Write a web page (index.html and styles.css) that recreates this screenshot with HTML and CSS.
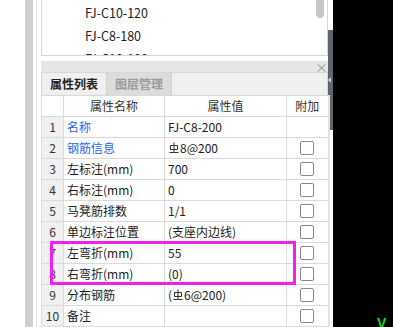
FILE: index.html
```html
<!DOCTYPE html>
<html lang="zh-CN">
<head>
    <meta charset="UTF-8">
    <title>属性列表</title>
    <link rel="stylesheet" href="styles.css">
</head>
<body>
<div class="screen">

    <!-- left gutter: white strip with the splitter bar -->
    <div class="gutter">
        <div class="gutter-bar"></div>
        <div class="gutter-line"></div>
    </div>

    <!-- main column: list on top, property panel below -->
    <div class="main">
        <div class="list">
            <div class="list-items">
                <div class="list-item">FJ-C10-120</div>
                <div class="list-item">FJ-C8-180</div>
                <div class="list-item">FJ-C10-100</div>
            </div>
            <div class="list-scroll"><div class="list-thumb"></div></div>
        </div>

        <div class="panel-head"><span class="panel-close">×</span></div>

        <div class="tabs">
            <div class="tab tab-active">属性列表</div>
            <div class="tab">图层管理</div>
        </div>

        <table class="props">
            <colgroup>
                <col class="col-num">
                <col class="col-name">
                <col class="col-value">
                <col class="col-extra">
            </colgroup>
            <tr class="head">
                <td></td>
                <td>属性名称</td>
                <td>属性值</td>
                <td>附加</td>
            </tr>
            <tr><td class="num">1</td><td class="name link">名称</td><td>FJ-C8-200</td><td></td></tr>
            <tr><td class="num">2</td><td class="name link">钢筋信息</td><td><svg class="rebar" viewBox="0 0 10 12"><path d="M5 0.5V10M1.5 3.5H8.5V7.5H1.5ZM0.5 10.5H9.5"/></svg>8@200</td><td><span class="check"></span></td></tr>
            <tr><td class="num">3</td><td class="name">左标注(mm)</td><td>700</td><td><span class="check"></span></td></tr>
            <tr><td class="num">4</td><td class="name">右标注(mm)</td><td>0</td><td><span class="check"></span></td></tr>
            <tr><td class="num">5</td><td class="name">马凳筋排数</td><td>1/1</td><td><span class="check"></span></td></tr>
            <tr><td class="num">6</td><td class="name">单边标注位置</td><td>(支座内边线)</td><td><span class="check"></span></td></tr>
            <tr><td class="num">7</td><td class="name">左弯折(mm)</td><td>55</td><td><span class="check"></span></td></tr>
            <tr><td class="num">8</td><td class="name">右弯折(mm)</td><td>(0)</td><td><span class="check"></span></td></tr>
            <tr><td class="num">9</td><td class="name">分布钢筋</td><td>(<svg class="rebar" viewBox="0 0 10 12"><path d="M5 0.5V10M1.5 3.5H8.5V7.5H1.5ZM0.5 10.5H9.5"/></svg>6@200)</td><td><span class="check"></span></td></tr>
            <tr><td class="num">10</td><td class="name">备注</td><td></td><td><span class="check"></span></td></tr>
        </table>

        <!-- magenta annotation box over rows 7 and 8 -->
        <div class="highlight"></div>
    </div>

    <!-- right splitter edge -->
    <div class="edge">
        <div class="edge-handle"><span class="edge-arrow"></span></div>
    </div>

    <!-- black area -->
    <div class="dark">
        <span class="dark-mark">V</span>
    </div>

</div>
</body>
</html>
```

FILE: styles.css
```css
/* page */
html, body {
    margin: 0;
    padding: 0;
}

body {
    font-family: "Noto Sans CJK SC", "Noto Sans", sans-serif;
    font-size: 12px;
    color: #222;
    background: #000;
}

.screen {
    display: flex;
    width: 393px;
    height: 327px;
    overflow: hidden;
    background: #fff;
}

/* left gutter */
.gutter {
    display: flex;
    width: 41px;
    flex-shrink: 0;
}

.gutter-bar {
    width: 8px;
    margin-left: 25px;
    background: #cfcfcf;
}

.gutter-line {
    width: 1px;
    margin-left: 3px;
    background: #e4e4e4;
}

/* main column */
.main {
    position: relative;
    width: 287px;
    flex-shrink: 0;
    display: flex;
    flex-direction: column;
}

.list {
    display: flex;
    height: 56px;
    border-left: 1px solid #d6d6d6;
    border-right: 1px solid #d6d6d6;
    border-bottom: 1px solid #d6d6d6;
    overflow: hidden;
}

.list-items {
    flex: 1;
    padding-left: 43px;
    padding-top: 1px;
}

.list-item {
    height: 23px;
    line-height: 23px;
    font-size: 12.5px;
    color: #222;
}

.list-scroll {
    width: 12px;
}

.list-thumb {
    width: 8px;
    height: 22px;
    margin-left: 1px;
    margin-top: -4px;
    border-radius: 4px;
    background: #c6c6c6;
}

.panel-head {
    display: flex;
    justify-content: flex-end;
    align-items: center;
    height: 11px;
    margin-top: 5px;
    background: #e6e6e6;
    border-bottom: 1px solid #d8d8d8;
    padding-right: 1px;
}

.panel-close {
    width: 12px;
    font-size: 13px;
    line-height: 11px;
    color: #9a9a9a;
    text-align: center;
}

/* tabs */
.tabs {
    display: flex;
    height: 22px;
    background: #f0f0f0;
    border-right: 1px solid #d8d8d8;
}

.tab {
    width: 64px;
    line-height: 22px;
    text-align: center;
    font-weight: bold;
    color: #9a9a9a;
    background: #dcdcdc;
    border-right: 1px solid #cfcfcf;
}

.tab-active {
    color: #222;
    background: #f0f0f0;
    border-left: 1px solid #d6d6d6;
}

/* property table */
.props {
    width: 287px;
    border-collapse: collapse;
    table-layout: fixed;
}

.col-num { width: 22px; }
.col-name { width: 101px; }
.col-value { width: 122px; }
.col-extra { width: 42px; }

.props td {
    height: 20px;
    padding: 0 3px;
    border: 1px solid #dadada;
    line-height: 20px;
    white-space: nowrap;
    overflow: hidden;
    color: #222;
}

.props tr:first-child td {
    border-top-color: #d8d8d8;
}

.props .head td {
    text-align: center;
    color: #333;
}

.props td.num {
    padding: 0;
    text-align: center;
    background: #f0f0f0;
    color: #333;
}

.props td.link {
    color: #2b63e6;
}

.props td:last-child {
    text-align: center;
    border-right: 2px solid #e2e2e2;
}

.check {
    display: inline-block;
    width: 12px;
    height: 12px;
    margin-top: 3px;
    border: 1px solid #888;
    border-radius: 2px;
    vertical-align: top;
    background: #fff;
}

.rebar {
    width: 10px;
    height: 12px;
    margin: 0 1px 0 1px;
    vertical-align: -1px;
    fill: none;
    stroke: #333;
    stroke-width: 1;
}

.highlight {
    position: absolute;
    left: 9px;
    top: 241px;
    width: 240px;
    height: 38px;
    border: 3px solid #f41eef;
}

/* right edge */
.edge {
    width: 5px;
    flex-shrink: 0;
    padding-top: 30px;
    background: #fff;
}

.edge-handle {
    display: flex;
    align-items: center;
    height: 100px;
    background: #5d656d;
}

.edge-arrow {
    width: 0;
    height: 0;
    border-top: 3px solid transparent;
    border-bottom: 3px solid transparent;
    border-right: 3px solid #c8ccd0;
}

/* black area */
.dark {
    flex: 1;
    display: flex;
    align-items: flex-end;
    padding-left: 44px;
    background: #000;
}

.dark-mark {
    font-family: "Liberation Sans", sans-serif;
    font-size: 14px;
    font-weight: bold;
    line-height: 10px;
    color: #1ed61e;
    margin-bottom: -1px;
}
```
